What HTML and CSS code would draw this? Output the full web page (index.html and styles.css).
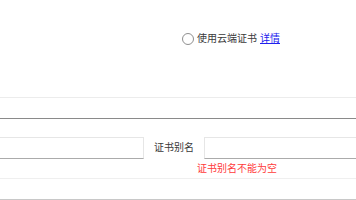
FILE: index.html
```html
<!DOCTYPE html>
<html lang="zh-CN">

<head>
  <meta charset="UTF-8">
  <meta name="viewport" content="width=device-width, initial-scale=1.0">
  <title>证书设置</title>
  <link rel="stylesheet" href="styles.css">
</head>

<body>
  <div class="top">
    <label class="cloud-opt">
      <span class="radio"></span>
      <span class="opt-text">使用云端证书</span>
      <a href="#" class="detail">详情</a>
    </label>
  </div>

  <div class="band"></div>

  <div class="fields">
    <div class="row">
      <input class="field field-first" type="text">
      <span class="field-label">证书别名</span>
      <input class="field field-alias" type="text">
    </div>
    <div class="error">证书别名不能为空</div>
  </div>

  <div class="bottom"></div>
</body>

</html>
```

FILE: styles.css
```css
* {
  margin: 0;
  padding: 0;
  box-sizing: border-box;
}

body {
  background: #fff;
  font-family: "Liberation Sans", "Noto Sans CJK SC", sans-serif;
  font-size: 10px;
  color: #3a3a3a;
  overflow: hidden;
}

/* top option row */
.top {
  height: 98px;
  padding: 32px 0 0 182px;
  border-bottom: 1px solid #ececec;
}

.cloud-opt {
  display: flex;
  align-items: center;
  height: 13px;
}

.radio {
  width: 12px;
  height: 12px;
  border: 1px solid #8f8f8f;
  border-radius: 50%;
  background: #fff;
}

.opt-text {
  margin-left: 3px;
  line-height: 13px;
}

.detail {
  margin-left: 3px;
  color: #2020ee;
  line-height: 13px;
}

.band {
  height: 21px;
  border-bottom: 1px solid #8a8a8a;
}

/* alias field */
.fields {
  height: 60px;
  padding-top: 18px;
  border-bottom: 1px solid #efefef;
}

.row {
  display: flex;
  align-items: center;
}

.field {
  height: 22px;
  min-width: 0;
  border: 1px solid #e6e6e6;
  border-bottom-color: #ababab;
  outline: none;
  background: #fff;
}

.field-first {
  width: 144px;
  flex-shrink: 0;
  border-left: none;
}

.field-label {
  flex-shrink: 0;
  white-space: nowrap;
  padding: 0 10px;
  line-height: 22px;
}

.field-alias {
  flex: 1;
  border-right: none;
}

.error {
  margin: 4px 0 0 197px;
  color: #ff3b3b;
  line-height: 12px;
}

.bottom {
  height: 21px;
  border-bottom: 1px solid #c8c8c8;
}
```
